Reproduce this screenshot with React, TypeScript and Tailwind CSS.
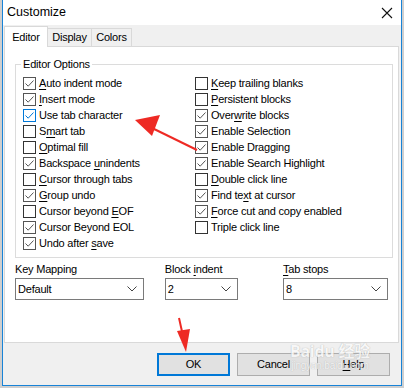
import React from 'react'

type Opt = { label: string; u?: number; checked?: boolean; focus?: boolean }

const leftOpts: Opt[] = [
  { label: 'Auto indent mode', u: 0, checked: true },
  { label: 'Insert mode', u: 0, checked: true },
  { label: 'Use tab character', checked: true, focus: true },
  { label: 'Smart tab', u: 1 },
  { label: 'Optimal fill', u: 0 },
  { label: 'Backspace unindents', u: 10, checked: true },
  { label: 'Cursor through tabs', u: 0 },
  { label: 'Group undo', u: 0, checked: true },
  { label: 'Cursor beyond EOF', u: 14 },
  { label: 'Cursor Beyond EOL', checked: true },
  { label: 'Undo after save', u: 11, checked: true },
]

const rightOpts: Opt[] = [
  { label: 'Keep trailing blanks', u: 0 },
  { label: 'Persistent blocks', u: 0 },
  { label: 'Overwrite blocks', u: 4, checked: true },
  { label: 'Enable Selection', checked: true },
  { label: 'Enable Dragging', checked: true },
  { label: 'Enable Search Highlight', checked: true },
  { label: 'Double click line', u: 0 },
  { label: 'Find text at cursor', u: 7, checked: true },
  { label: 'Force cut and copy enabled', u: 0, checked: true },
  { label: 'Triple click line' },
]

function Mnemonic({ text, u }: { text: string; u?: number }) {
  if (u === undefined) return <>{text}</>
  return (
    <>
      {text.slice(0, u)}
      <span className="underline underline-offset-[2px]">{text[u]}</span>
      {text.slice(u + 1)}
    </>
  )
}

function CheckRow({ opt }: { opt: Opt }) {
  const border = opt.focus ? 'border-[#0078d7]' : opt.checked ? 'border-[#555]' : 'border-[#333]'
  const stroke = opt.focus ? '#0078d7' : '#555'
  return (
    <div className="flex h-4 items-center">
      <div className={`flex h-[13px] w-[13px] shrink-0 items-center justify-center border bg-white ${border}`}>
        {opt.checked && (
          <svg width="11" height="11" viewBox="0 0 11 11">
            <path d="M1.5 5.5 L4.2 8.2 L9.5 2.5" fill="none" stroke={stroke} strokeWidth="1" />
          </svg>
        )}
      </div>
      <span className="ml-[3px] whitespace-nowrap">
        <Mnemonic text={opt.label} u={opt.u} />
      </span>
    </div>
  )
}

function Combo({ value, width }: { value: string; width: string }) {
  return (
    <div className={`flex h-[22px] items-center justify-between border border-[#7a7a7a] bg-white pl-[2px] pr-[6px] ${width}`}>
      <span>{value}</span>
      <svg width="10" height="6" viewBox="0 0 10 6">
        <path d="M0.5 0.5 L5 5 L9.5 0.5" fill="none" stroke="#444" strokeWidth="1" />
      </svg>
    </div>
  )
}

function Button({ label, u, primary }: { label: string; u?: number; primary?: boolean }) {
  return (
    <div
      className={`flex h-[23px] w-[73px] items-center justify-center bg-[#e1e1e1] ${
        primary ? 'border-2 border-[#0078d7]' : 'border border-[#adadad]'
      }`}
    >
      <Mnemonic text={label} u={u} />
    </div>
  )
}

export default function App() {
  return (
    <div className="relative h-[388px] w-[404px] overflow-hidden bg-[#cfcfcf] text-[11px] tracking-[-0.2px] text-black [font-family:'Liberation_Sans',Arial,sans-serif]">
      <div className="ml-[2px] flex h-[386px] w-[400px] flex-col border-x border-b border-[#1883d7] bg-[#f0f0f0]">
        {/* title bar */}
        <div className="flex h-[25px] items-center justify-between bg-white pl-[4px] pr-[8px]">
          <span className="text-[12.5px] tracking-normal">Customize</span>
          <svg width="12" height="12" viewBox="0 0 12 12">
            <path d="M1 1 L11 11 M11 1 L1 11" stroke="#111" strokeWidth="1.1" />
          </svg>
        </div>

        {/* tabs */}
        <div className="ml-[1px] mt-[1px] flex h-[20px] items-end">
          <div className="relative z-10 -mb-px flex h-[21px] w-[44px] items-center justify-center border border-b-0 border-[#d9d9d9] bg-white">
            Editor
          </div>
          <div className="flex h-[18px] w-[44px] items-center justify-center border border-l-0 border-b-0 border-[#d9d9d9]">
            Display
          </div>
          <div className="flex h-[18px] w-[40px] items-center justify-center border border-l-0 border-b-0 border-[#d9d9d9]">
            Colors
          </div>
        </div>

        {/* tab panel */}
        <div className="ml-[1px] flex h-[297px] w-[395px] flex-col border border-[#d9d9d9] bg-white px-[10px] pt-[17px]">
          <div className="relative h-[194px] w-[378px] border border-[#dcdcdc] pl-[7px] pt-[10px]">
            <span className="absolute -top-[8px] left-[5px] bg-white px-[2px] leading-[14px]">Editor Options</span>
            <div className="flex">
              <div className="w-[172px]">
                {leftOpts.map((o) => (
                  <CheckRow key={o.label} opt={o} />
                ))}
              </div>
              <div>
                {rightOpts.map((o) => (
                  <CheckRow key={o.label} opt={o} />
                ))}
              </div>
            </div>
          </div>

          <div className="mt-[2px] flex">
            <div className="w-[152px]">
              <div className="h-[18px] leading-[18px]">Key Mapping</div>
              <Combo value="Default" width="w-[129px]" />
            </div>
            <div className="w-[120px]">
              <div className="h-[18px] leading-[18px]">
                <Mnemonic text="Block indent" u={6} />
              </div>
              <Combo value="2" width="w-[73px]" />
            </div>
            <div>
              <div className="h-[18px] leading-[18px]">
                <Mnemonic text="Tab stops" u={0} />
              </div>
              <Combo value="8" width="w-[105px]" />
            </div>
          </div>
        </div>

        {/* buttons */}
        <div className="mt-[10px] flex justify-end gap-[7px] pr-[11px]">
          <Button label="OK" primary />
          <Button label="Cancel" />
          <Button label="Help" u={0} />
        </div>
      </div>

      {/* watermark */}
      <div className="pointer-events-none absolute left-[290px] top-[342px] flex flex-col items-center text-[#f9f9f9] opacity-80 [text-shadow:0_0_1px_#999]">
        <span className="text-[16px] font-bold leading-[18px] [font-family:'Noto_Sans','Noto_Sans_CJK_SC',sans-serif]">Baidu 经验</span>
        <span className="text-[10px] leading-[12px]">jingyan.baidu.com</span>
      </div>

      {/* red annotation arrows */}
      <svg className="pointer-events-none absolute left-0 top-0" width="404" height="388">
        <line x1="197" y1="150" x2="150" y2="127" stroke="#ee2a24" strokeWidth="2" />
        <polygon points="135,120 160,115 152,136" fill="#ee2a24" />
        <line x1="179" y1="318" x2="183" y2="336" stroke="#ee2a24" strokeWidth="2" />
        <polygon points="177,331 190,329 186,352" fill="#ee2a24" />
      </svg>
    </div>
  )
}
